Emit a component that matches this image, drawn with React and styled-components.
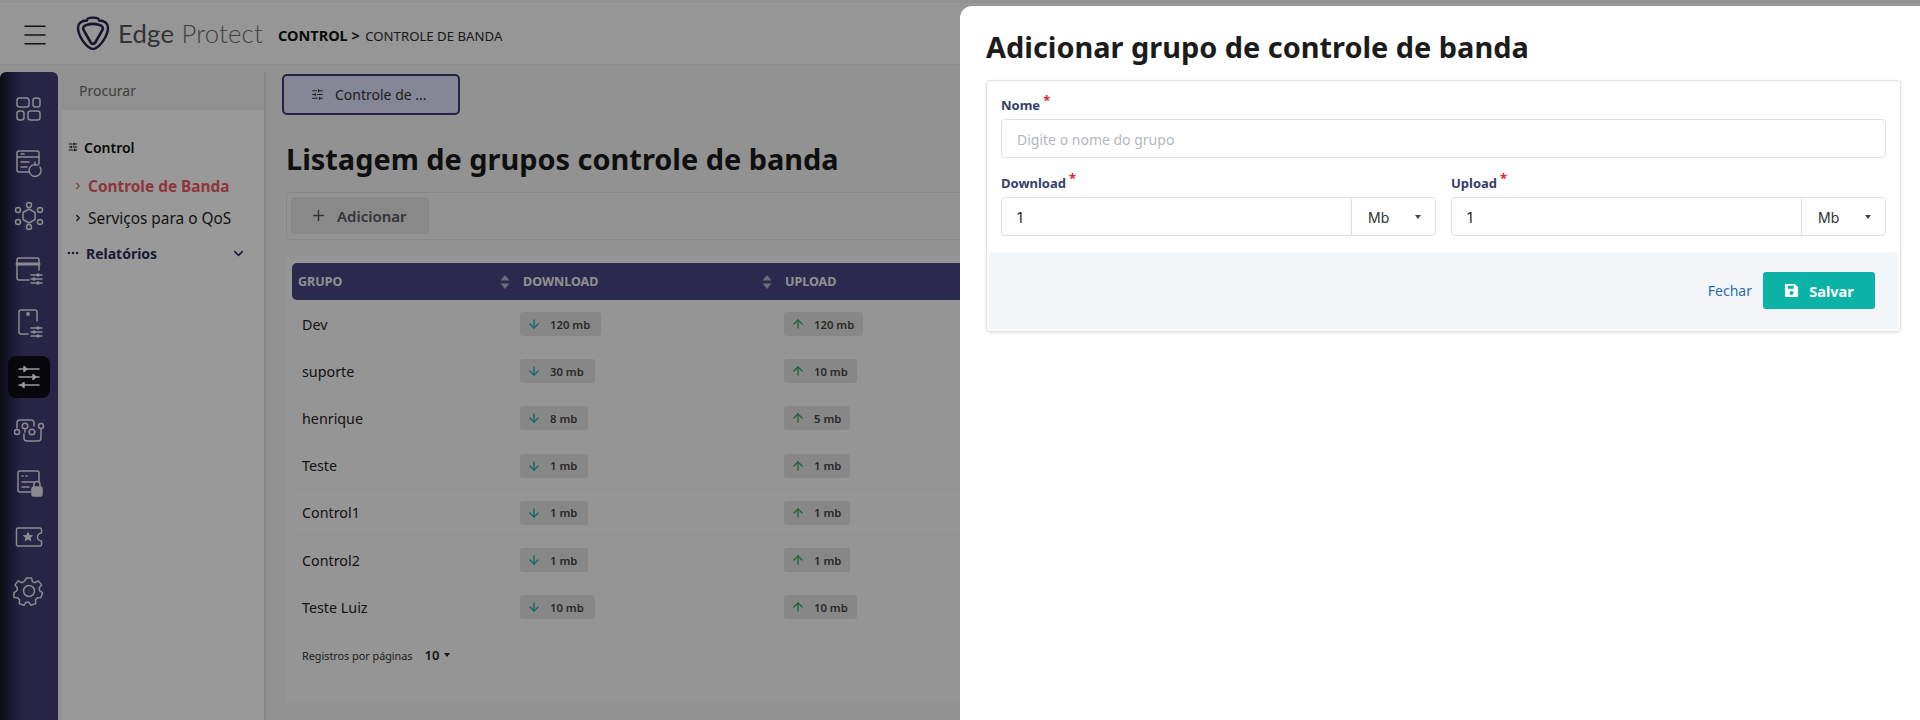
import styled, { createGlobalStyle } from "styled-components"
import { ArrowDown, ArrowUp, ChevronDown, ChevronRight, Ellipsis, Plus, SlidersHorizontal, Menu } from "lucide-react"

const Global = createGlobalStyle`
  html, body { margin: 0; padding: 0; height: 720px; overflow: hidden; }
  body { font-family: "Noto Sans", sans-serif; background: #f5f5f5; }
  * { box-sizing: border-box; }
`

const Page = styled.div`
  position: relative;
  width: 1920px;
  height: 720px;
  overflow: hidden;
  background: #f3f3f3;
  padding-top: 3px;
`

const Header = styled.header`
  height: 63px;
  background: #fafafa;
  border-top: 2px solid #fff;
  border-bottom: 2px solid #e9e9e9;
  display: flex;
  align-items: center;
  padding-left: 24px;
`

const Burger = styled.div`
  width: 22px;
  height: 22px;
  color: #222;
  margin-right: 30px;
  display: flex;
  align-items: center;
  justify-content: center;
  svg { flex: none; }
`

const Brand = styled.div`
  display: flex;
  align-items: center;
  gap: 8px;
  margin-right: 15px;
  margin-top: -4px;
`

const BrandText = styled.span`
  display: inline-block;
  width: 145px;
  white-space: nowrap;
  font-family: Lato, sans-serif;
  font-size: 25.7px;
  font-weight: 300;
  color: #6d6d70;
  letter-spacing: 0.2px;
  b {
    font-weight: 400;
    color: #55555a;
  }
`

const Crumb = styled.div`
  font-size: 13.2px;
  color: #2c2c2c;
  b {
    font-size: 14.5px;
    font-weight: 700;
    color: #111;
    margin-right: 2px;
  }
`

const Body = styled.div`
  display: flex;
  height: 654px;
`

const Rail = styled.nav`
  width: 58px;
  margin-top: 6px;
  background: linear-gradient(90deg, #14141d 0, #2a2850 10px, #433e76 24px, #413c74 100%);
  border-radius: 6px 6px 0 0;
  display: flex;
  flex-direction: column;
  align-items: center;
  padding-top: 16px;
  flex: none;
`

const RailItem = styled.div`
  width: 42px;
  height: 42px;
  margin-bottom: 11.5px;
  border-radius: 8px;
  display: flex;
  align-items: center;
  justify-content: center;
  color: ${p => (p.$active ? "#fff" : "#e8e8ee")};
  background: ${p => (p.$active ? "#0c0c14" : "transparent")};
`

const SideMenu = styled.aside`
  width: 204px;
  margin: 6px 0 0 4px;
  background: #fff;
  border-right: 2px solid #e2e2e2;
  flex: none;
`

const SearchBox = styled.div`
  height: 38px;
  background: #f1f1f1;
  color: #6b6b6b;
  font-size: 14px;
  line-height: 38px;
  padding-left: 17px;
`

const MenuTitle = styled.div`
  display: flex;
  align-items: center;
  gap: 6px;
  margin: 27px 0 0 6px;
  height: 20px;
  font-size: 14px;
  font-weight: 600;
  color: #111;
`

const SubItem = styled.div`
  display: flex;
  align-items: center;
  gap: 5px;
  height: 32px;
  padding-left: 11px;
  font-size: 15.4px;
  margin-top: ${p => (p.$first ? "13px" : "0")};
  font-weight: ${p => (p.$active ? 700 : 400)};
  color: ${p => (p.$active ? "#ee5a66" : "#1c1c1c")};
`

const MenuGroup = styled.div`
  display: flex;
  align-items: center;
  height: 24px;
  margin: 7px 0 0 4px;
  padding-right: 18px;
  font-size: 14px;
  font-weight: 700;
  color: #2f2e5b;
  gap: 6px;
  span { flex: 1; }
`

const Main = styled.main`
  flex: 1;
  min-width: 0;
  padding: 8px 0 0 16px;
`

const TabButton = styled.div`
  width: 178px;
  height: 41px;
  background: #dedffa;
  border: 2px solid #3f3a74;
  border-radius: 5px;
  display: flex;
  align-items: center;
  padding-left: 27px;
  gap: 11px;
  font-size: 14px;
  color: #333;
`

const Title = styled.h1`
  margin: 20px 0 0 4px;
  font-size: 28.9px;
  line-height: 48px;
  font-weight: 700;
  color: #1a1a1a;
`

const Toolbar = styled.div`
  margin: 9px 0 0 4px;
  height: 48px;
  background: #f6f6f6;
  border: 1px solid #e3e3e3;
  border-radius: 4px;
  padding: 4px;
`

const AddButton = styled.div`
  width: 138px;
  height: 37px;
  background: #e4e4e6;
  border-radius: 3px;
  display: flex;
  align-items: center;
  padding-left: 19px;
  gap: 10px;
  font-size: 15px;
  font-weight: 600;
  color: #55595f;
`

const TableCard = styled.section`
  margin: 16px 0 0 4px;
  height: 447px;
  background: #f9f9f9;
  padding: 7px 0 0 6px;
`

const Columns = styled.div`
  display: grid;
  grid-template-columns: 225px 262px 1fr;
  align-items: center;
`

const TableHead = styled(Columns)`
  height: 37px;
  background: #4a4583;
  border-radius: 5px 0 0 5px;
  color: #f0f0f0;
  font-size: 12.5px;
  font-weight: 700;
  padding-left: 6px;
`

const HeadCell = styled.div`
  display: flex;
  align-items: center;
  justify-content: space-between;
  padding-right: 13px;
  svg { display: block; }
`

const Row = styled(Columns)`
  height: 47.2px;
  border-bottom: 1px solid #f4f4f4;
  padding: 2px 0 0 10px;
  font-size: 14.3px;
  color: #222;
`

const Badge = styled.div`
  display: inline-flex;
  align-items: center;
  justify-self: start;
  height: 24px;
  margin-left: ${p => (p.$up ? "-5px" : "-7px")};
  padding: 0 ${p => (p.$up ? "9px" : "11px")} 0 7px;
  background: #e2e2e2;
  border-radius: 3px;
  gap: 9px;
  font-size: 11.3px;
  font-weight: 600;
  color: #444;
  svg { color: ${p => (p.$up ? "#27a65a" : "#13a9a0")}; }
`

const Pager = styled.div`
  display: flex;
  align-items: center;
  height: 28px;
  margin-top: 11px;
  padding-left: 10px;
  font-size: 10.8px;
  color: #333;
`

const PagerValue = styled.span`
  font-size: 13px;
  font-weight: 600;
  color: #222;
  margin: 0 5px 0 12px;
`

const Caret = styled.span`
  width: 0;
  height: 0;
  border-left: 3.5px solid transparent;
  border-right: 3.5px solid transparent;
  border-top: 4px solid ${p => p.$color || "#222"};
`

const Backdrop = styled.div`
  position: absolute;
  inset: 0;
  background: rgba(0, 0, 0, 0.4);
`

const Drawer = styled.div`
  position: absolute;
  left: 960px;
  top: 6px;
  right: 0;
  bottom: 0;
  background: #fff;
  border-radius: 12px 0 0 0;
  padding: 0 19px 0 26px;
`

const DrawerTitle = styled.h2`
  margin: 0;
  height: 74px;
  font-size: 28.9px;
  line-height: 52px;
  font-weight: 700;
  color: #1c1c1c;
  display: flex;
  align-items: center;
  padding-top: 7px;
`

const FormCard = styled.div`
  height: 252px;
  border: 1px solid #e2e2e2;
  border-radius: 4px;
  box-shadow: 0 1px 3px rgba(0, 0, 0, 0.1);
  display: flex;
  flex-direction: column;
`

const Fields = styled.div`
  padding: 14px 14px 0;
  height: 171px;
`

const FieldGrid = styled.div`
  display: grid;
  grid-template-columns: 1fr 1fr;
  gap: 15px;
`

const Label = styled.label`
  display: block;
  height: ${p => (p.$tight ? "24px" : "25px")};
  padding-top: ${p => (p.$tight ? "0" : "1px")};
  font-size: 13px;
  font-weight: 700;
  color: #34406b;
  line-height: 20px;
  sup {
    color: #e0252f;
    font-size: 13px;
    line-height: 0;
    margin-left: 3px;
  }
`

const Field = styled.div`
  margin-bottom: ${p => (p.$spaced ? "14px" : "0")};
`

const InputBox = styled.div`
  height: 39px;
  border: 1px solid #dcdfe4;
  border-radius: 4px;
  display: flex;
  align-items: center;
  padding: 1px 0 0 15px;
  font-family: ${p => (p.$placeholder ? '"Noto Sans"' : "Inter")}, sans-serif;
  font-size: 14px;
  color: ${p => (p.$placeholder ? "#b4b7bc" : "#222")};
`

const InputValue = styled.span`
  flex: 1;
`

const UnitSelect = styled.div`
  width: 84px;
  height: 100%;
  border-left: 1px solid #dcdfe4;
  display: flex;
  align-items: center;
  justify-content: space-between;
  padding: 0 14px 0 16px;
  color: #333;
`

const Actions = styled.div`
  flex: 1;
  margin: 0 2px 2px;
  background: #f3f6f9;
  display: flex;
  align-items: center;
  justify-content: flex-end;
  padding-right: 23px;
  gap: 11px;
`

const LinkButton = styled.span`
  font-size: 14px;
  color: #2b6cb0;
`

const SaveButton = styled.div`
  width: 112px;
  height: 37px;
  background: #0bb3a7;
  border-radius: 3px;
  display: flex;
  align-items: center;
  justify-content: center;
  gap: 10px;
  font-size: 14.5px;
  font-weight: 700;
  color: #fff;
`

const Logo = () => (
  <svg width="34" height="34" viewBox="0 0 34 34" fill="none" stroke="#24234a" strokeLinecap="round">
    <path d="M11 4.500C5.500 4.500 2 7.500 2 11.500C2 19.500 9 29.500 14.500 32.200C16 33 18 33 19.500 32.200C25 29.500 32 19.500 32 11.500C32 7.500 28.500 4.500 23 4.500" strokeWidth="2.400" />
    <path d="M11.500 2.800C14.500 1.200 19.500 1.200 22.500 2.800" strokeWidth="2.400" />
    <path d="M10.500 9C14 7.800 20 7.800 23.500 9C26.500 9.900 27.500 12 26.300 14.200L19.300 26.500C18.200 28.300 15.800 28.300 14.700 26.500L7.700 14.200C6.500 12 7.500 9.900 10.500 9Z" strokeWidth="2.600" />
  </svg>
)

const SaveIcon = () => (
  <svg width="15" height="15" viewBox="0 0 16 16">
    <path fillRule="evenodd" fill="currentColor" d="M2.500 1h9L15 4.500v9a1.500 1.500 0 0 1-1.500 1.500h-11A1.500 1.500 0 0 1 1 13.500v-11A1.500 1.500 0 0 1 2.500 1zM4 3v3h6.500V3zM8 8.500a2.200 2.200 0 1 0 0 4.400 2.200 2.200 0 0 0 0-4.400z" />
  </svg>
)

const Glyph = ({ children }) => (
  <svg width="32" height="32" viewBox="0 0 32 32" fill="none" stroke="currentColor" strokeWidth="1.5" strokeLinecap="round" strokeLinejoin="round">
    {children}
  </svg>
)

const sliderLines = (
  <>
    <path d="M18 21h11M18 25h11M18 29h11" />
    <circle cx="25" cy="21" r="1" fill="currentColor" />
    <circle cx="21" cy="25" r="1" fill="currentColor" />
    <circle cx="25" cy="29" r="1" fill="currentColor" />
  </>
)

const railIcons = [
  <Glyph key="a">
    <rect x="4" y="5" width="12" height="9" rx="2.500" /><rect x="20" y="5" width="7" height="9" rx="2.500" />
    <rect x="4" y="18" width="7" height="9" rx="2.500" /><rect x="15" y="18" width="12" height="9" rx="2.500" />
  </Glyph>,
  <Glyph key="b">
    <path d="M16 25H6a2 2 0 0 1-2-2V6a2 2 0 0 1 2-2h18a2 2 0 0 1 2 2v11" />
    <path d="M4 10h22M8 7h3M8 15h8M8 20h6" />
    <path d="M27 20a6 6 0 1 1-5-2.600" /><path d="M22 15v3h3" />
  </Glyph>,
  <Glyph key="c">
    <path d="M16 9l6 3.500v7L16 23l-6-3.500v-7z" />
    <circle cx="16" cy="5" r="2.500" /><circle cx="16" cy="27" r="2.500" />
    <circle cx="5" cy="10" r="2.500" /><circle cx="27" cy="10" r="2.500" />
    <circle cx="5" cy="22" r="2.500" /><circle cx="27" cy="22" r="2.500" />
  </Glyph>,
  <Glyph key="d">
    <path d="M16 26H6a2 2 0 0 1-2-2V6a2 2 0 0 1 2-2h18a2 2 0 0 1 2 2v10" />
    <path d="M4 10h22" strokeWidth="3" />
    {sliderLines}
  </Glyph>,
  <Glyph key="e">
    <path d="M15 27H8a2 2 0 0 1-2-2V5a2 2 0 0 1 2-2h14a2 2 0 0 1 2 2v9" />
    <circle cx="15" cy="7" r="1.200" fill="currentColor" />
    {sliderLines}
  </Glyph>,
  <Glyph key="f">
    <path d="M6 8h20M6 16h20M6 24h20" />
    <path d="M11 5.500l3 2.500-3 2.500zM20 13.500l3 2.500-3 2.500zM11 21.500l-3 2.500 3 2.500z" fill="currentColor" />
  </Glyph>,
  <Glyph key="g">
    <path d="M4 14V9a3 3 0 0 1 3-3h11a3 3 0 0 1 3 3v3" />
    <circle cx="4" cy="18" r="2.500" /><circle cx="12" cy="12" r="2.800" />
    <path d="M12 15v3" />
    <circle cx="19" cy="18" r="2.800" /><circle cx="28" cy="12" r="2.500" />
    <path d="M28 15v9a3 3 0 0 1-3 3H14a3 3 0 0 1-3-3v-4" />
  </Glyph>,
  <Glyph key="h">
    <path d="M18 24H7a2 2 0 0 1-2-2V5a2 2 0 0 1 2-2h17a2 2 0 0 1 2 2v9" />
    <path d="M9 8h1M13 8h1M9 14h12M9 19h7" />
    <rect x="19" y="19" width="10" height="9" rx="1.500" fill="currentColor" />
    <path d="M21 19v-2.500a3 3 0 0 1 6 0V19" />
  </Glyph>,
  <Glyph key="i">
    <path d="M5 7h22a1.500 1.500 0 0 1 1.500 1.500V12a4 4 0 0 0 0 8v3.500A1.500 1.500 0 0 1 27 25H5a1.500 1.500 0 0 1-1.500-1.500v-15A1.500 1.500 0 0 1 5 7z" />
    <path d="M15 10.500l1.600 3.400 3.700.4-2.700 2.500.7 3.700-3.300-1.900-3.300 1.900.7-3.700-2.700-2.500 3.700-.4z" fill="currentColor" stroke="none" />
  </Glyph>,
  <Glyph key="j">
    <circle cx="16" cy="16" r="5.500" />
    <path d="M13.500 3h5l1 3.600 2.600 1.100 3.300-1.800 3.200 4-2.400 2.900.3 2.900 3 2-1.500 4.900-3.700.1-1.900 2.200.4 3.700-4.800 1.600-2.100-3h-2.800l-2.100 3-4.800-1.600.4-3.700-1.900-2.200-3.700-.1L1 17.700l3-2 .3-2.900L2 9.900l3.200-4 3.300 1.800 2.600-1.100z" />
  </Glyph>,
]

const SortIcon = () => (
  <svg width="10" height="14" viewBox="0 0 10 14" fill="#b5b5c2">
    <path d="M5 0l4.500 5.500h-9zM5 14L.5 8.500h9z" />
  </svg>
)

const groups = [
  { name: "Dev", down: "120 mb", up: "120 mb" },
  { name: "suporte", down: "30 mb", up: "10 mb" },
  { name: "henrique", down: "8 mb", up: "5 mb" },
  { name: "Teste", down: "1 mb", up: "1 mb" },
  { name: "Control1", down: "1 mb", up: "1 mb" },
  { name: "Control2", down: "1 mb", up: "1 mb" },
  { name: "Teste Luiz", down: "10 mb", up: "10 mb" },
]

export default function App() {
  return (
    <Page>
      <Global />
      <Header>
        <Burger><Menu size={30} strokeWidth={1.2} /></Burger>
        <Brand>
          <Logo />
          <BrandText><b>Edge</b> Protect</BrandText>
        </Brand>
        <Crumb><b>CONTROL &gt;</b> CONTROLE DE BANDA</Crumb>
      </Header>
      <Body>
        <Rail>
          {railIcons.map((icon, i) => (
            <RailItem key={i} $active={i === 5}>{icon}</RailItem>
          ))}
        </Rail>
        <SideMenu>
          <SearchBox>Procurar</SearchBox>
          <MenuTitle><SlidersHorizontal size={10} strokeWidth={2.5} />Control</MenuTitle>
          <SubItem $first $active><ChevronRight size={10} strokeWidth={3} color="#ee5a66" />Controle de Banda</SubItem>
          <SubItem><ChevronRight size={10} strokeWidth={3} />Serviços para o QoS</SubItem>
          <MenuGroup>
            <Ellipsis size={14} strokeWidth={2.5} />
            <span>Relatórios</span>
            <ChevronDown size={15} strokeWidth={2.5} />
          </MenuGroup>
        </SideMenu>
        <Main>
          <TabButton><SlidersHorizontal size={13} strokeWidth={2} />Controle de ...</TabButton>
          <Title>Listagem de grupos controle de banda</Title>
          <Toolbar>
            <AddButton><Plus size={17} strokeWidth={2} />Adicionar</AddButton>
          </Toolbar>
          <TableCard>
            <TableHead>
              <HeadCell>GRUPO<SortIcon /></HeadCell>
              <HeadCell>DOWNLOAD<SortIcon /></HeadCell>
              <HeadCell>UPLOAD</HeadCell>
            </TableHead>
            {groups.map(g => (
              <Row key={g.name}>
                <div>{g.name}</div>
                <Badge><ArrowDown size={14} strokeWidth={2.2} />{g.down}</Badge>
                <Badge $up><ArrowUp size={14} strokeWidth={2.2} />{g.up}</Badge>
              </Row>
            ))}
            <Pager>
              Registros por páginas
              <PagerValue>10</PagerValue>
              <Caret />
            </Pager>
          </TableCard>
        </Main>
      </Body>
      <Backdrop />
      <Drawer>
        <DrawerTitle>Adicionar grupo de controle de banda</DrawerTitle>
        <FormCard>
          <Fields>
            <Field $spaced>
              <Label $tight>Nome<sup>*</sup></Label>
              <InputBox $placeholder>Digite o nome do grupo</InputBox>
            </Field>
            <FieldGrid>
              <Field>
                <Label>Download<sup>*</sup></Label>
                <InputBox>
                  <InputValue>1</InputValue>
                  <UnitSelect>Mb<Caret $color="#444" /></UnitSelect>
                </InputBox>
              </Field>
              <Field>
                <Label>Upload<sup>*</sup></Label>
                <InputBox>
                  <InputValue>1</InputValue>
                  <UnitSelect>Mb<Caret $color="#444" /></UnitSelect>
                </InputBox>
              </Field>
            </FieldGrid>
          </Fields>
          <Actions>
            <LinkButton>Fechar</LinkButton>
            <SaveButton><SaveIcon />Salvar</SaveButton>
          </Actions>
        </FormCard>
      </Drawer>
    </Page>
  )
}
